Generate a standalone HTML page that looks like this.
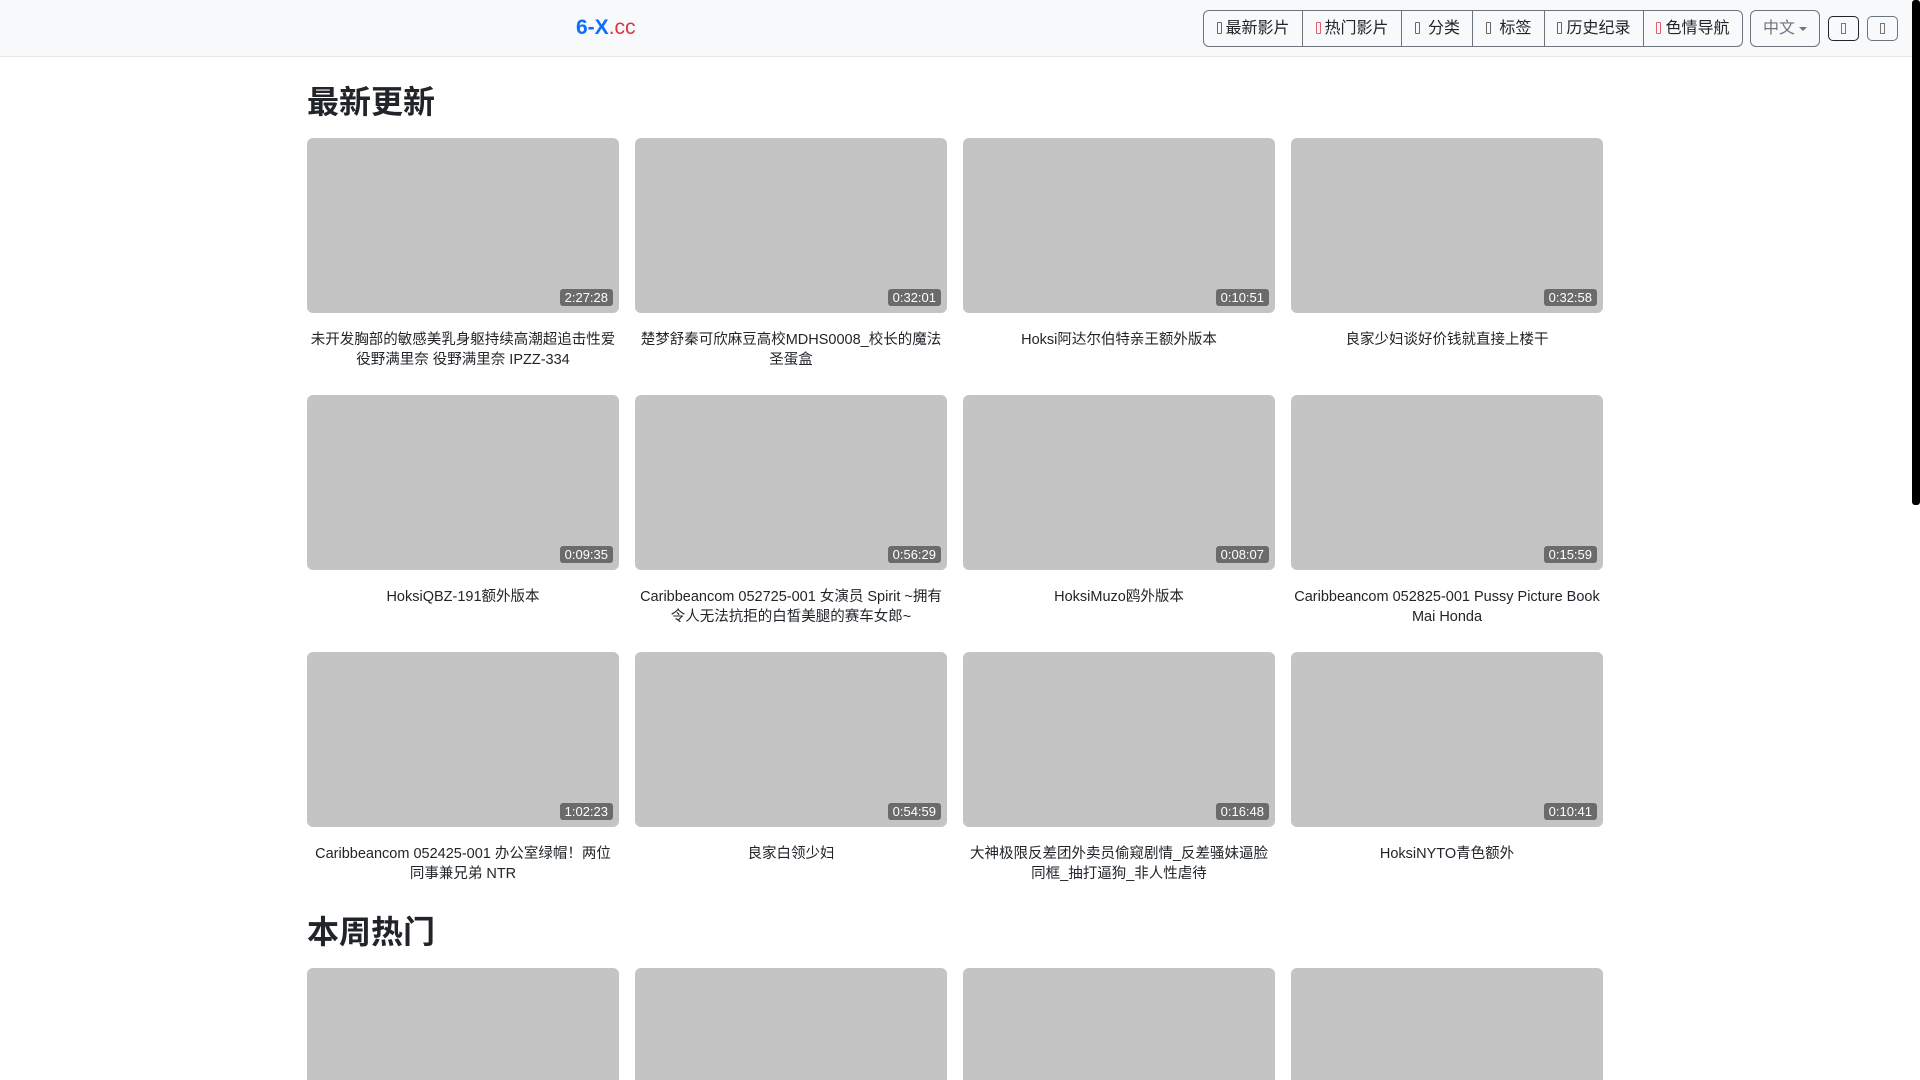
<!DOCTYPE html>
<html style="width:1920px;height:1080px;overflow:hidden"><head><meta charset="utf-8"><style>
*{box-sizing:border-box;margin:0;padding:0}
body{width:1920px;height:1080px;overflow:hidden;background:#fff;font-family:"Liberation Sans","Noto Sans CJK SC",sans-serif;color:#212529;position:relative}
.nav{height:57px;background:#f8f9fa;border-bottom:1px solid #e5e6e7;position:relative}
.logo{position:absolute;left:576px;top:16px;font-size:21px;font-weight:bold;color:#0d6efd}
.logo span{color:#dc3545;font-weight:normal}
.grp{position:absolute;left:1203px;top:10px;height:37px;display:flex;border:1px solid #6c757d;border-radius:6px}
.grp div{padding:0 12.5px;line-height:35px;font-size:16px;border-left:1px solid #6c757d;white-space:nowrap}
.grp div:first-child{border-left:none}
.ic{display:inline-block;width:5px;height:12px;border:1px solid #666;border-radius:1px;margin-right:4px;vertical-align:-1px}
.r{border-color:#e35d6a}
.lang{position:absolute;left:1750px;top:10px;width:70px;height:37px;border:1px solid #6c757d;border-radius:6px;color:#6c757d;font-size:16px;line-height:35px;padding-left:12px}
.lang:after{content:"";position:absolute;right:12px;top:16px;border:4px solid transparent;border-top-color:#6c757d;border-bottom:0}
.sb{position:absolute;top:16px;width:31px;height:25px;border:1px solid #212529;border-radius:5px}
.sb i{position:absolute;left:12px;top:6px;width:5px;height:11px;border:1px solid #777}
.scroll{position:absolute;right:0;top:0;width:8px;height:505px;background:#000;border-radius:3px}
.wrap{position:absolute;left:307px;width:1296px}
h2{font-size:32px;font-weight:bold;line-height:38px;height:38px}
.row{display:flex;gap:16px;margin-top:17px}
.row+.row{margin-top:0}
.card{width:312px;height:257px}
.img{height:175px;background:#c4c4c4;border-radius:6px;position:relative}
.d{position:absolute;right:6px;bottom:7px;background:#6b6b6b;color:#fff;font-size:13px;line-height:17px;padding:0 5px;border-radius:3px}
.t{margin-top:17px;text-align:center;font-size:14.5px;line-height:20px;padding:0 2px}
</style></head><body>
<div class="nav">
<div class="logo">6-X<span>.cc</span></div>
<div class="grp"><div><i class="ic"></i>最新影片</div><div><i class="ic r"></i>热门影片</div><div><i class="ic"></i> 分类</div><div><i class="ic"></i> 标签</div><div><i class="ic"></i>历史纪录</div><div><i class="ic r"></i>色情导航</div></div>
<div class="lang">中文</div>
<div class="sb" style="left:1828px"><i></i></div>
<div class="sb" style="left:1867px;border-color:#6c757d"><i></i></div>
</div>
<div class="scroll"></div>
<div class="wrap" style="top:83px">
<h2>最新更新</h2>
<div class="row">
<div class="card"><div class="img"><span class="d">2:27:28</span></div><div class="t">未开发胸部的敏感美乳身躯持续高潮超追击性爱 役野满里奈 役野满里奈 IPZZ-334</div></div>
<div class="card"><div class="img"><span class="d">0:32:01</span></div><div class="t">楚梦舒秦可欣麻豆高校MDHS0008_校长的魔法圣蛋盒</div></div>
<div class="card"><div class="img"><span class="d">0:10:51</span></div><div class="t">Hoksi阿达尔伯特亲王额外版本</div></div>
<div class="card"><div class="img"><span class="d">0:32:58</span></div><div class="t">良家少妇谈好价钱就直接上楼干</div></div>
</div>
<div class="row">
<div class="card"><div class="img"><span class="d">0:09:35</span></div><div class="t">HoksiQBZ-191额外版本</div></div>
<div class="card"><div class="img"><span class="d">0:56:29</span></div><div class="t">Caribbeancom 052725-001 女演员 Spirit ~拥有令人无法抗拒的白皙美腿的赛车女郎~</div></div>
<div class="card"><div class="img"><span class="d">0:08:07</span></div><div class="t">HoksiMuzo鸥外版本</div></div>
<div class="card"><div class="img"><span class="d">0:15:59</span></div><div class="t">Caribbeancom 052825-001 Pussy Picture Book Mai Honda</div></div>
</div>
<div class="row">
<div class="card"><div class="img"><span class="d">1:02:23</span></div><div class="t">Caribbeancom 052425-001 办公室绿帽！两位同事兼兄弟 NTR</div></div>
<div class="card"><div class="img"><span class="d">0:54:59</span></div><div class="t">良家白领少妇</div></div>
<div class="card"><div class="img"><span class="d">0:16:48</span></div><div class="t">大神极限反差团外卖员偷窥剧情_反差骚妹逼脸同框_抽打逼狗_非人性虐待</div></div>
<div class="card"><div class="img"><span class="d">0:10:41</span></div><div class="t">HoksiNYTO青色额外</div></div>
</div>
</div>
<div class="wrap" style="top:913px;height:167px;overflow:hidden">
<h2>本周热门</h2>
<div class="row">
<div class="card"><div class="img"></div></div>
<div class="card"><div class="img"></div></div>
<div class="card"><div class="img"></div></div>
<div class="card"><div class="img"></div></div>
</div>
</div>
</body></html>
